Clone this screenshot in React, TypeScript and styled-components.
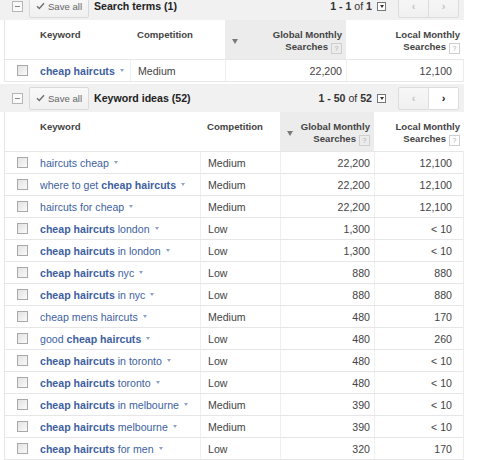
import React from "react";
import styled, { createGlobalStyle } from "styled-components";

const GlobalStyle = createGlobalStyle`
  html, body { margin: 0; padding: 0; background: #fff; }
  body { font-family: "Liberation Sans", Arial, sans-serif; color: #333; }
`;

const Page = styled.div`
  width: 464px;
  margin-top: -8px;
  display: flex;
  flex-direction: column;
  gap: 2px;
`;

const Section = styled.section`
  display: flex;
  flex-direction: column;
`;

const Toolbar = styled.div`
  height: 28px;
  background: #f1f1f1;
  display: flex;
  align-items: center;
  padding: 0 5px 0 12px;
  box-sizing: border-box;
`;

const Collapse = styled.span`
  width: 9px;
  height: 9px;
  border: 1px solid #b5b5b5;
  background: #fafafa;
  display: flex;
  align-items: center;
  justify-content: center;
  &::after {
    content: "";
    width: 5px;
    height: 1px;
    background: #888;
  }
`;

const SaveButton = styled.button`
  margin-left: 6px;
  width: 60px;
  height: 23px;
  border: 1px solid #dadada;
  border-radius: 2px;
  background: linear-gradient(#f9f9f9, #f0f0f0);
  color: #666;
  font-family: inherit;
  font-size: 9.6px;
  display: flex;
  align-items: center;
  justify-content: center;
  gap: 3px;
  padding: 0;
`;

const Title = styled.span`
  margin-left: 5px;
  font-weight: bold;
  font-size: 10.6px;
  color: #222;
`;

const Spacer = styled.div`
  flex: 1;
`;

const Paging = styled.span`
  font-size: 10.6px;
  color: #333;
  display: flex;
  align-items: center;
  b { font-weight: bold; }
`;

const DropBox = styled.span`
  margin-left: 5px;
  width: 7px;
  height: 7px;
  border: 1px solid #777;
  background: #fff;
  display: flex;
  align-items: center;
  justify-content: center;
  &::after {
    content: "";
    border-left: 2.5px solid transparent;
    border-right: 2.5px solid transparent;
    border-top: 3px solid #333;
  }
`;

const Pager = styled.div`
  margin-left: 12px;
  display: flex;
`;

const PageBtn = styled.button<{ $on?: boolean; $first?: boolean }>`
  width: 31px;
  height: 23px;
  border: 1px solid #dcdcdc;
  margin-left: ${(p) => (p.$first ? "0" : "-1px")};
  border-radius: ${(p) => (p.$first ? "2px 0 0 2px" : "0 2px 2px 0")};
  background: ${(p) => (p.$on ? "#fff" : "linear-gradient(#f7f7f7, #f0f0f0)")};
  color: ${(p) => (p.$on ? "#111" : "#c4c4c4")};
  font-family: inherit;
  font-weight: bold;
  font-size: 11px;
  padding: 0;
  display: flex;
  align-items: center;
  justify-content: center;
`;

const Table = styled.div`
  margin-left: 4px;
  border-left: 1px solid #e6e6e6;
  border-right: 1px solid #ececec;
`;

const Grid = styled.div<{ $cols: string; $head?: boolean }>`
  display: grid;
  grid-template-columns: ${(p) => p.$cols};
  height: ${(p) => (p.$head ? "40px" : "22px")};
  border-bottom: 1px solid #e6e6e6;
  box-sizing: border-box;
`;

const HeadCell = styled.div<{ $sorted?: boolean; $right?: boolean; $pr?: number }>`
  background: ${(p) => (p.$sorted ? "#ececec" : "#fff")};
  font-weight: bold;
  font-size: 9.6px;
  line-height: 12px;
  color: #444;
  padding: 9px ${(p) => p.$pr ?? 5}px 0 7px;
  text-align: ${(p) => (p.$right ? "right" : "left")};
  display: flex;
  justify-content: ${(p) => (p.$right ? "flex-end" : "flex-start")};
  gap: 6px;
  box-sizing: border-box;
`;

const SortArrow = styled.span`
  align-self: center;
  margin-top: -6px;
  margin-right: auto;
  border-left: 3.5px solid transparent;
  border-right: 3.5px solid transparent;
  border-top: 5px solid #7a7a7a;
`;

const Help = styled.span`
  display: inline-flex;
  align-items: center;
  justify-content: center;
  width: 9px;
  height: 9px;
  border: 1px solid #cfcfcf;
  color: #aaa;
  font-size: 7px;
  font-weight: normal;
  margin-left: 3px;
  vertical-align: -1px;
  line-height: 1;
`;

const Cell = styled.div<{ $right?: boolean; $pr?: number; $line?: boolean }>`
  display: flex;
  align-items: center;
  justify-content: ${(p) => (p.$right ? "flex-end" : "flex-start")};
  padding: 0 ${(p) => p.$pr ?? 5}px 0 7px;
  font-size: 10.6px;
  color: #444;
  white-space: nowrap;
  border-left: ${(p) => (p.$line ? "1px solid #efefef" : "none")};
  box-sizing: border-box;
`;

const CheckCell = styled.div`
  display: flex;
  align-items: center;
  padding-left: 12px;
`;

const Check = styled.span`
  width: 9px;
  height: 9px;
  border: 1px solid #a9a9a9;
  background: linear-gradient(135deg, #e2e2e2, #fafafa);
`;

const KeyLink = styled.span`
  color: #3e5f9f;
  b { font-weight: bold; }
`;

const Caret = styled.span`
  display: inline-block;
  margin-left: 5px;
  vertical-align: 2px;
  border-left: 2.5px solid transparent;
  border-right: 2.5px solid transparent;
  border-top: 3px solid #8ea2c8;
`;

const CheckIcon = () => (
  <svg width="9" height="8" viewBox="0 0 9 8">
    <path d="M1 4.2 L3.3 6.5 L8 1.2" stroke="#6f6f6f" strokeWidth="1.4" fill="none" />
  </svg>
);

type Row = { kw: React.ReactNode; comp: string; g: string; l: string };

const B = ({ children }: { children: React.ReactNode }) => <b>{children}</b>;
const CH = <B>cheap haircuts</B>;

const ideas: Row[] = [
  { kw: <>haircuts cheap</>, comp: "Medium", g: "22,200", l: "12,100" },
  { kw: <>where to get {CH}</>, comp: "Medium", g: "22,200", l: "12,100" },
  { kw: <>haircuts for cheap</>, comp: "Medium", g: "22,200", l: "12,100" },
  { kw: <>{CH} london</>, comp: "Low", g: "1,300", l: "< 10" },
  { kw: <>{CH} in london</>, comp: "Low", g: "1,300", l: "< 10" },
  { kw: <>{CH} nyc</>, comp: "Low", g: "880", l: "880" },
  { kw: <>{CH} in nyc</>, comp: "Low", g: "880", l: "880" },
  { kw: <>cheap mens haircuts</>, comp: "Medium", g: "480", l: "170" },
  { kw: <>good {CH}</>, comp: "Low", g: "480", l: "260" },
  { kw: <>{CH} in toronto</>, comp: "Low", g: "480", l: "< 10" },
  { kw: <>{CH} toronto</>, comp: "Low", g: "480", l: "< 10" },
  { kw: <>{CH} in melbourne</>, comp: "Medium", g: "390", l: "< 10" },
  { kw: <>{CH} melbourne</>, comp: "Medium", g: "390", l: "< 10" },
  { kw: <>{CH} for men</>, comp: "Low", g: "320", l: "170" },
];

const terms: Row[] = [{ kw: <>{CH}</>, comp: "Medium", g: "22,200", l: "12,100" }];

type Props = {
  title: string;
  paging: React.ReactNode;
  next: boolean;
  cols: string;
  rows: Row[];
};

const KeywordSection = ({ title, paging, next, cols, rows }: Props) => (
  <Section>
    <Toolbar>
      <Collapse />
      <SaveButton>
        <CheckIcon />
        Save all
      </SaveButton>
      <Title>{title}</Title>
      <Spacer />
      <Paging>
        {paging}
        <DropBox />
      </Paging>
      <Pager>
        <PageBtn $first>‹</PageBtn>
        <PageBtn $on={next}>›</PageBtn>
      </Pager>
    </Toolbar>
    <Table>
      <Grid $cols={cols} $head>
        <HeadCell />
        <HeadCell>Keyword</HeadCell>
        <HeadCell>Competition</HeadCell>
        <HeadCell $sorted $right $pr={4}>
          <SortArrow />
          <span>
            Global Monthly
            <br />
            Searches<Help>?</Help>
          </span>
        </HeadCell>
        <HeadCell $right $pr={4}>
          <span>
            Local Monthly
            <br />
            Searches<Help>?</Help>
          </span>
        </HeadCell>
      </Grid>
      {rows.map((r, i) => (
        <Grid $cols={cols} key={i}>
          <CheckCell>
            <Check />
          </CheckCell>
          <Cell>
            <KeyLink>{r.kw}</KeyLink>
            <Caret />
          </Cell>
          <Cell $line>{r.comp}</Cell>
          <Cell $line $right $pr={4}>
            {r.g}
          </Cell>
          <Cell $line $right $pr={12}>
            {r.l}
          </Cell>
        </Grid>
      ))}
    </Table>
  </Section>
);

export default function App() {
  return (
    <>
      <GlobalStyle />
      <Page>
        <KeywordSection
          title="Search terms (1)"
          paging={
            <>
              <b>1 - 1</b>&nbsp;of&nbsp;<b>1</b>
            </>
          }
          next={false}
          cols="28px 97px 95px 121px 118px"
          rows={terms}
        />
        <KeywordSection
          title="Keyword ideas (52)"
          paging={
            <>
              <b>1 - 50</b>&nbsp;of&nbsp;<b>52</b>
            </>
          }
          next={true}
          cols="28px 167px 80px 94px 90px"
          rows={ideas}
        />
      </Page>
    </>
  );
}
